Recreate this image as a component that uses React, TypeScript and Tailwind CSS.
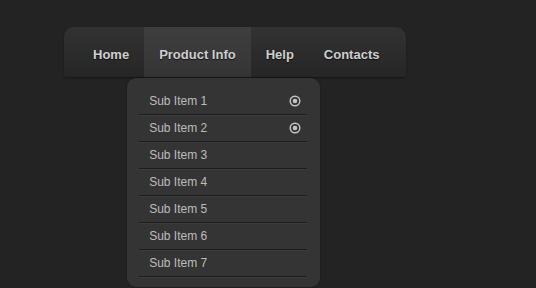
const items = ["Sub Item 1", "Sub Item 2", "Sub Item 3", "Sub Item 4", "Sub Item 5", "Sub Item 6", "Sub Item 7"];

function RadioMark() {
  return (
    <svg width="12" height="12" viewBox="0 0 12 12" className="shrink-0">
      <circle cx="6" cy="6" r="4.8" fill="none" stroke="#c4c4c4" strokeWidth="1.4" />
      <circle cx="6" cy="6" r="2.3" fill="#c4c4c4" />
    </svg>
  );
}

export default function App() {
  const navLink = "flex h-full items-center px-[15px] pt-[6px] text-[13px] font-bold text-[#cfcfcf] [text-shadow:0_1px_1px_#111]";

  return (
    <div className="min-h-screen w-full overflow-hidden bg-[#232323] pt-[27px] pl-[64px] font-['Liberation_Sans',Arial,sans-serif]">
      <nav className="flex h-[50px] w-[342px] items-stretch rounded-t-[10px] rounded-b-[3px] bg-[linear-gradient(#323232,#2b2b2b_60%,#262626)] pl-[14px] shadow-[0_1px_2px_rgba(0,0,0,0.4)]">
        <a className={navLink}>Home</a>
        <div className="relative">
          <a className={navLink + " bg-[linear-gradient(#3e3e3e,#383838_70%,#343434)]"}>Product Info</a>
          <div className="absolute left-[-17px] top-[51px] z-10 w-[193px] rounded-[9px] bg-[#343434] pt-[10px] pb-[10px] shadow-[0_0_2px_rgba(0,0,0,0.5)]">
            <ul className="mx-[12px] mr-[13px] flex flex-col">
              {items.map((item, i) => (
                <li
                  key={item}
                  className="flex h-[27px] items-center justify-between border-b border-[#1c1c1c] pl-[10px] pr-[6px] text-[12px] text-[#bdbdbd] shadow-[0_1px_0_#3c3c3c]"
                >
                  <span>{item}</span>
                  {i < 2 && <RadioMark />}
                </li>
              ))}
            </ul>
          </div>
        </div>
        <a className={navLink}>Help</a>
        <a className={navLink}>Contacts</a>
      </nav>
    </div>
  );
}
